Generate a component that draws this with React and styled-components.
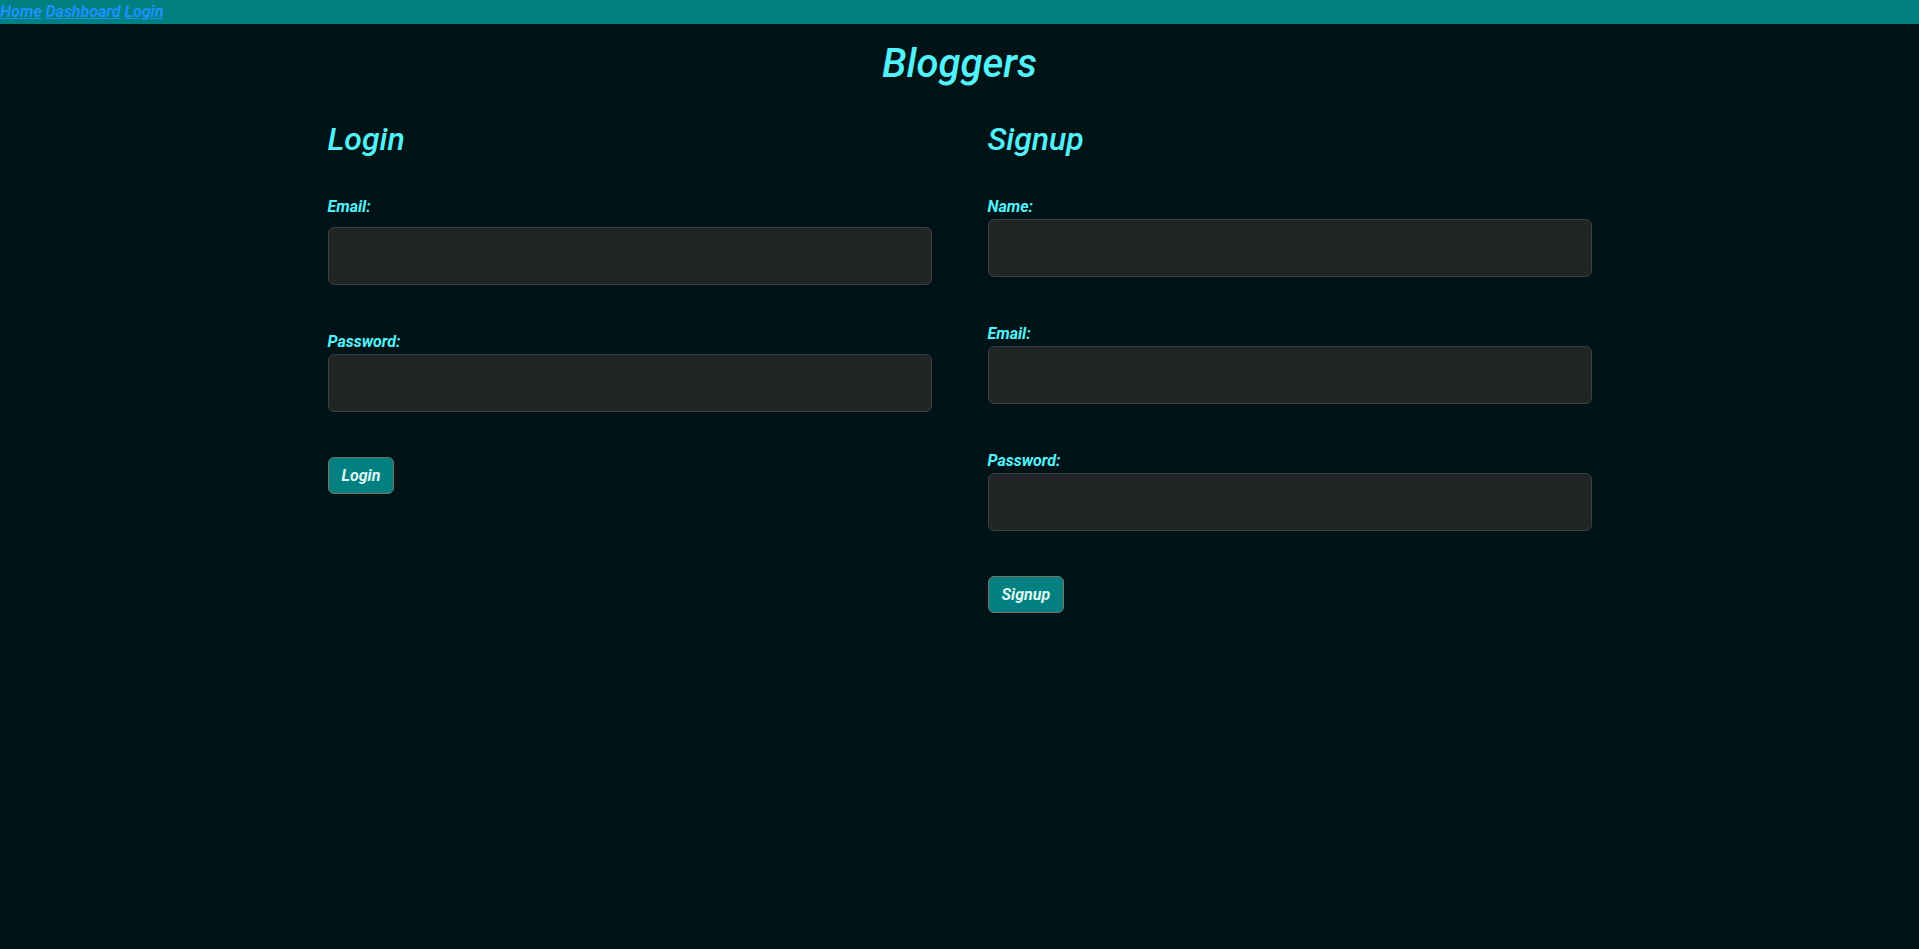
import React from 'react';
import styled, { createGlobalStyle } from 'styled-components';

const GlobalStyle = createGlobalStyle`
  html, body {
    margin: 0;
    padding: 0;
    background: #001417;
    min-height: 100%;
  }
  body {
    font-family: Roboto, "Liberation Sans", sans-serif;
    font-style: italic;
    font-size: 16px;
    line-height: 1.5;
    color: #52f2fc;
  }
  #root {
    min-height: 100vh;
    background: #001417;
  }
`;

const Nav = styled.nav`
  height: 24px;
  background: #008080;
  line-height: 24px;
  font-size: 16px;
  font-weight: 700;
`;

const NavLink = styled.a`
  color: #1e90ff;
  text-decoration: underline;
  cursor: pointer;
`;

const Main = styled.main`
  width: 1320px;
  margin: 0 auto;
`;

const Title = styled.h1`
  margin: 16px 0 0;
  font-size: 40px;
  font-weight: 500;
  line-height: 1.2;
  text-align: center;
  color: #52f2fc;
`;

const Columns = styled.div`
  display: grid;
  grid-template-columns: 1fr 1fr;
  padding-top: 32px;
`;

const Column = styled.section`
  padding: 0 28px;
`;

const Heading = styled.h2`
  margin: 0 0 37px;
  font-size: 32px;
  font-weight: 500;
  line-height: 1.2;
  color: #52f2fc;
`;

const Field = styled.div`
  margin-bottom: 45px;
`;

const Label = styled.label`
  display: block;
  margin-bottom: ${p => p.$gap}px;
  font-size: 16px;
  font-weight: 700;
  line-height: 24px;
  color: #52f2fc;
`;

const Input = styled.input`
  display: block;
  box-sizing: border-box;
  width: 100%;
  height: 58px;
  padding: 6px 12px;
  background: #212526;
  border: 1px solid #3a3e41;
  border-radius: 6px;
  color: #e6e6e6;
  font: inherit;
  outline: none;
`;

const Button = styled.button`
  padding: 6px 13px;
  background: #008080;
  border: 1px solid #7a7468;
  border-radius: 6px;
  color: #dff6f4;
  font-family: inherit;
  font-style: italic;
  font-size: 16px;
  font-weight: 700;
  line-height: 23px;
  cursor: pointer;
`;

function FormField({ label, type, gap = 0 }) {
  return (
    <Field>
      <Label $gap={gap}>{label}</Label>
      <Input type={type} />
    </Field>
  );
}

export default function App() {
  return (
    <>
      <GlobalStyle />
      <Nav>
        <NavLink>Home</NavLink> <NavLink>Dashboard</NavLink> <NavLink>Login</NavLink>
      </Nav>
      <Main>
        <Title>Bloggers</Title>
        <Columns>
          <Column>
            <Heading>Login</Heading>
            <form onSubmit={e => e.preventDefault()}>
              <FormField label="Email:" type="email" gap={8} />
              <FormField label="Password:" type="password" />
              <Button type="submit">Login</Button>
            </form>
          </Column>
          <Column>
            <Heading>Signup</Heading>
            <form onSubmit={e => e.preventDefault()}>
              <FormField label="Name:" type="text" />
              <FormField label="Email:" type="email" />
              <FormField label="Password:" type="password" />
              <Button type="submit">Signup</Button>
            </form>
          </Column>
        </Columns>
      </Main>
    </>
  );
}
